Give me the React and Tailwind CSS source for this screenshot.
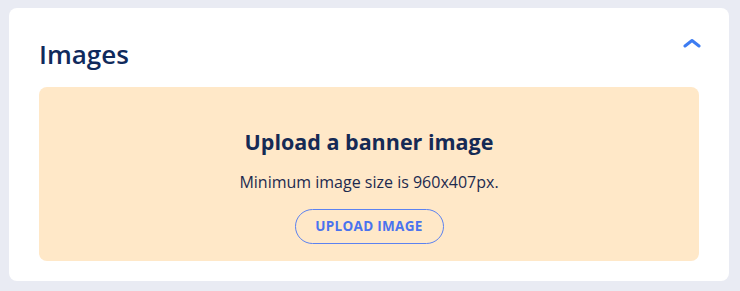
import React from 'react';

const ChevronUp = () => (
  <svg width="18" height="10" viewBox="0 0 18 10" fill="none" className="text-[#3d7cf2]">
    <path d="M2 8L9 2.5L16 8" stroke="currentColor" strokeWidth="3" strokeLinecap="round" strokeLinejoin="round" />
  </svg>
);

const App = () => {
  return (
    <div className="min-h-screen bg-[#e9ebf3] px-[9px] pt-[8px] pb-[10px]" style={{ fontFamily: '"Open Sans", sans-serif' }}>
      <div className="w-[720px] bg-white rounded-[8px] px-[30px] pt-[26px] pb-[20px]">
        <div className="flex items-start justify-between h-[53px]">
          <h2 className="text-[26px] font-semibold text-[#102a5c] leading-[40px]">Images</h2>
          <button className="mt-[4px] -mr-[2px]">
            <ChevronUp />
          </button>
        </div>
        <div className="bg-[#ffe8c8] rounded-[8px] h-[174px] flex flex-col items-center pt-[40px]">
          <h3 className="text-[21.5px] font-bold text-[#152a55] leading-[30px]">Upload a banner image</h3>
          <p className="mt-[14px] text-[16px] text-[#1d2a4f] leading-[22px]">Minimum image size is 960x407px.</p>
          <button className="mt-[16px] w-[149px] h-[35px] rounded-full border border-[#5c82f0] text-[#4a73ee] text-[13.5px] font-bold tracking-[0.3px]">
            UPLOAD IMAGE
          </button>
        </div>
      </div>
    </div>
  );
};

export default App;
